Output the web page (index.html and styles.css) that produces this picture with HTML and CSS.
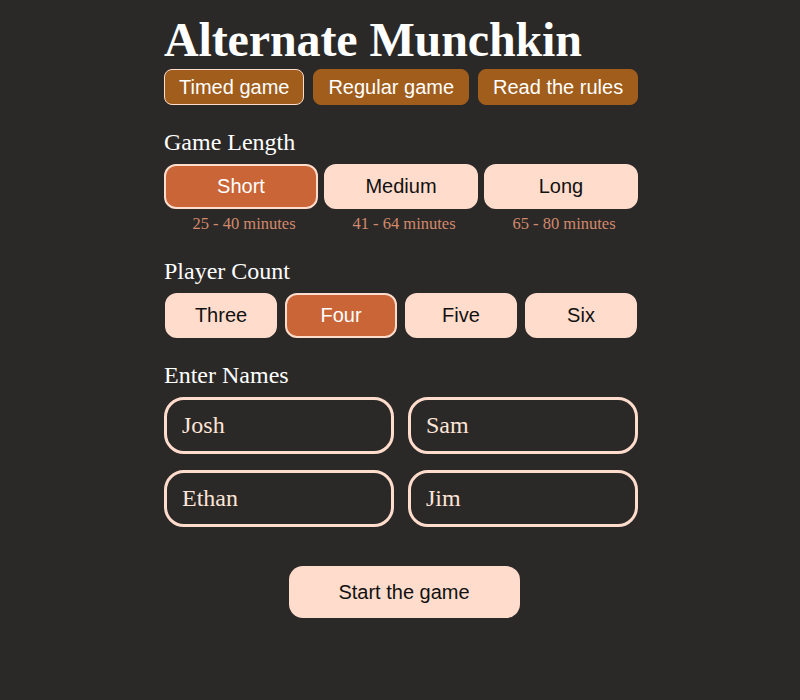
FILE: index.html
```html
<!DOCTYPE html>
<html>
<head>
<meta charset="utf-8">
<link rel="stylesheet" href="styles.css">
</head>
<body>
<main class="app">
  <h1 class="title">Alternate Munchkin</h1>
  <nav class="nav">
    <button class="nav-btn active">Timed game</button>
    <button class="nav-btn">Regular game</button>
    <button class="nav-btn">Read the rules</button>
  </nav>

  <section class="section">
    <h2 class="label">Game Length</h2>
    <div class="length-grid">
      <div class="option">
        <button class="choice selected">Short</button>
        <div class="hint">25 - 40 minutes</div>
      </div>
      <div class="option">
        <button class="choice">Medium</button>
        <div class="hint">41 - 64 minutes</div>
      </div>
      <div class="option">
        <button class="choice">Long</button>
        <div class="hint">65 - 80 minutes</div>
      </div>
    </div>
  </section>

  <section class="section">
    <h2 class="label">Player Count</h2>
    <div class="count-grid">
      <button class="choice">Three</button>
      <button class="choice selected">Four</button>
      <button class="choice">Five</button>
      <button class="choice">Six</button>
    </div>
  </section>

  <section class="section">
    <h2 class="label">Enter Names</h2>
    <div class="names-grid">
      <input class="name" type="text" value="Josh">
      <input class="name" type="text" value="Sam">
      <input class="name" type="text" value="Ethan">
      <input class="name" type="text" value="Jim">
    </div>
  </section>

  <div class="start-row">
    <button class="start">Start the game</button>
  </div>
</main>
</body>
</html>
```
FILE: styles.css
```css
html, body {
  margin: 0;
  padding: 0;
  background: #2b2927;
}
body {
  font-family: "Liberation Serif", "Times New Roman", serif;
  color: #ffffff;
}
.app {
  width: 474px;
  margin: 0 auto;
  padding-top: 12px;
  padding-left: 2px;
}
.title {
  font-size: 48px;
  font-weight: bold;
  line-height: 55px;
  letter-spacing: -0.12px;
  margin: 0 0 2px 0;
  white-space: nowrap;
}
.nav {
  display: flex;
  gap: 9px;
}
.nav-btn {
  flex: none;
  white-space: nowrap;
  font-family: "Liberation Sans", Arial, sans-serif;
  font-size: 20px;
  color: #ffffff;
  background: #a05d1c;
  border: 1px solid #a05d1c;
  border-radius: 8px;
  height: 36px;
  padding: 0 14px;
  cursor: pointer;
}
.nav-btn.active {
  border-color: #ffdccc;
}
.section {
  margin-top: 23px;
}
.label {
  font-size: 24px;
  font-weight: normal;
  line-height: 28px;
  margin: 0 0 8px 0;
}
.length-grid {
  display: grid;
  grid-template-columns: repeat(3, 1fr);
  gap: 6px;
}
.option {
  display: flex;
  flex-direction: column;
  align-items: center;
}
.choice {
  font-family: "Liberation Sans", Arial, sans-serif;
  font-size: 20px;
  color: #111111;
  background: #ffdccc;
  border: 2px solid #ffdccc;
  border-radius: 12px;
  height: 45px;
  width: 100%;
  padding: 0;
  cursor: pointer;
}
.choice.selected {
  background: #c96537;
  color: #ffffff;
}
.hint {
  font-size: 16.5px;
  color: #d28a6c;
  margin-top: 5px;
  padding-left: 6px;
  line-height: 20px;
  white-space: nowrap;
}
.count-grid {
  display: grid;
  grid-template-columns: repeat(4, 1fr);
  gap: 8px;
  padding: 0 1px;
}
.names-grid {
  display: grid;
  grid-template-columns: 230px 230px;
  justify-content: space-between;
  row-gap: 16px;
}
.name {
  box-sizing: border-box;
  width: 230px;
  height: 57px;
  border: 3px solid #ffdccc;
  border-radius: 20px;
  background: transparent;
  color: #ffe4d8;
  font-family: "Liberation Serif", "Times New Roman", serif;
  font-size: 24px;
  padding: 0 15px;
  outline: none;
}
.start-row {
  display: flex;
  justify-content: center;
  margin-top: 39px;
  padding-left: 6px;
}
.start {
  font-family: "Liberation Sans", Arial, sans-serif;
  font-size: 20px;
  color: #111111;
  background: #ffdccc;
  border: none;
  border-radius: 14px;
  width: 231px;
  height: 52px;
  cursor: pointer;
}
```
